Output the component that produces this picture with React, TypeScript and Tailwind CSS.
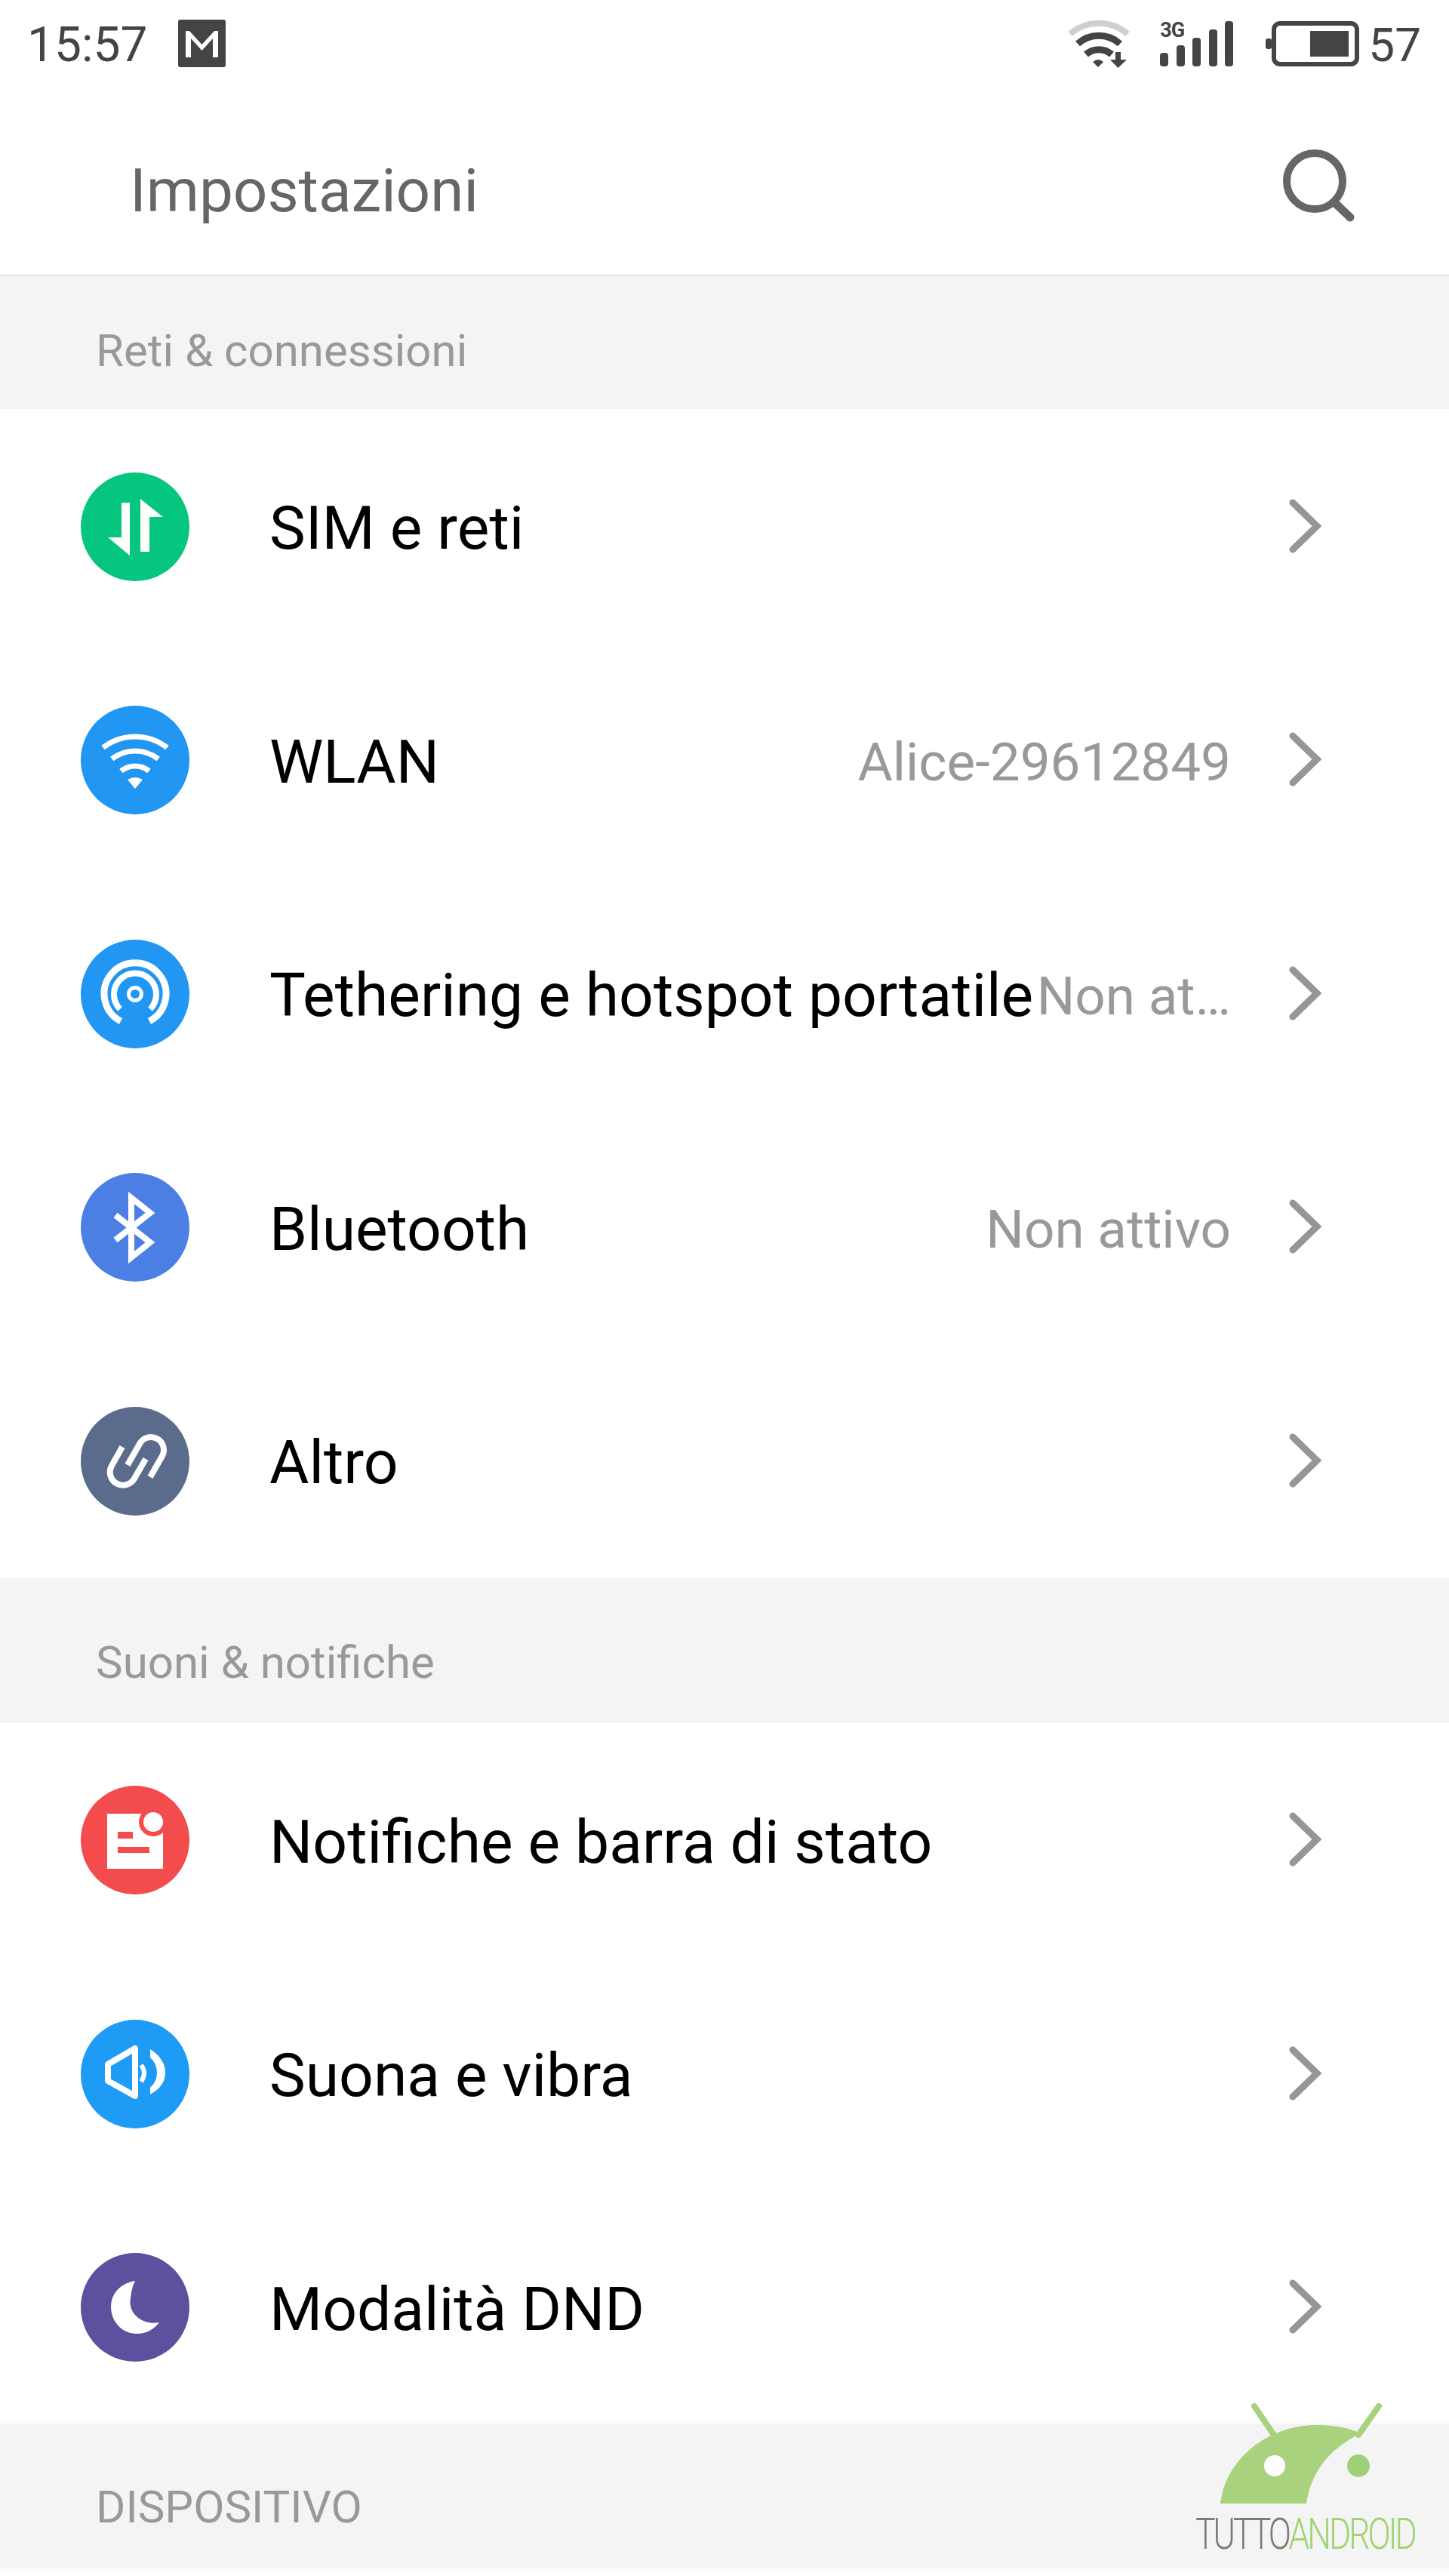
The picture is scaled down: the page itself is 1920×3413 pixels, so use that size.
const sans = "font-['Roboto','Noto_Sans',sans-serif]";

const Circle = ({ color, children }: { color: string; children: React.ReactNode }) => (
  <svg width={144} height={144} viewBox="0 0 144 144" className="mt-[2px] shrink-0">
    <circle cx={72} cy={72} r={72} fill={color} />
    {children}
  </svg>
);

const SimIcon = () => (
  <Circle color="#06c67f">
    <path d="M54 40H65V110L36 86H54Z M79 35L109 59H91V105H79Z" fill="#fff" />
  </Circle>
);

const WlanIcon = () => (
  <Circle color="#2196f3">
    <g fill="none" stroke="#fff" strokeWidth={7}>
      <path d="M29.5 55.6A69 69 0 0 1 114.5 55.6" />
      <path d="M41.2 70.6A50 50 0 0 1 102.8 70.6" />
      <path d="M53.5 86.4A30 30 0 0 1 90.5 86.4" />
    </g>
    <path d="M72 110L62 98Q72 92 82 98Z" fill="#fff" />
  </Circle>
);

const HotspotIcon = () => (
  <Circle color="#2196f3">
    <g fill="none" stroke="#fff">
      <circle cx={72} cy={72} r={8.5} strokeWidth={5} />
      <path d="M53 108A41 41 0 1 1 91 108" strokeWidth={9} />
      <path d="M52 92A28 28 0 1 1 92 92" strokeWidth={8} />
    </g>
  </Circle>
);

const BluetoothIcon = () => (
  <Circle color="#4c7fe3">
    <path d="M46 56L92 92L67 112V33L92 53L46 89" fill="none" stroke="#fff" strokeWidth={8} />
  </Circle>
);

const LinkIcon = () => (
  <Circle color="#5b6b8b">
    <g fill="none" stroke="#fff" strokeWidth={8}>
      <path d="M55 53L41 78A17 17 0 0 0 71 95L86 69" />
      <path d="M62 77L78 49A17 17 0 0 1 108 65L92 93" />
    </g>
  </Circle>
);

const NotifyIcon = () => (
  <Circle color="#f44b4d">
    <path d="M35 37H109V110H35Z" fill="#fff" />
    <circle cx={96} cy={48} r={19} fill="#f44b4d" />
    <circle cx={96} cy={48} r={13} fill="#fff" />
    <path d="M49 61H69V70H49Z M49 81H91V89H49Z" fill="#f44b4d" />
  </Circle>
);

const SoundIcon = () => (
  <Circle color="#1e9bf5">
    <path d="M36 59L72 38V101L36 81Z" fill="none" stroke="#fff" strokeWidth={8} strokeLinejoin="round" />
    <path d="M80 60Q88 70 80 82" fill="none" stroke="#fff" strokeWidth={6} />
    <path d="M92 39Q112 52 112 70Q112 88 92 99L92 90Q101 82 101 70Q101 58 92 50Z" fill="#fff" />
  </Circle>
);

const MoonIcon = () => (
  <Circle color="#5b519f">
    <path d="M72 37C52 40 40 55 40 71C40 92 56 107 74 107C87 107 97 101 104 92C84 96 62 82 66 60C67 50 69 43 72 37Z" fill="#fff" />
  </Circle>
);

const Chevron = () => (
  <svg width={44} height={72} viewBox="0 0 44 72" className="block">
    <path d="M5 5L37 36L5 67" fill="none" stroke="#969696" strokeWidth={9} strokeLinecap="round" />
  </svg>
);

const Section = ({ title, className }: { title: string; className: string }) => (
  <div className={`flex items-center bg-[#f4f4f4] pl-[127px] text-[60px] text-[#999] ${className}`}>{title}</div>
);

const Row = ({ icon, label, value }: { icon: React.ReactNode; label: string; value?: string }) => (
  <div className="flex h-[309.5px] items-center pl-[107px] pr-[168px]">
    {icon}
    <span className="ml-[106px] mt-[8px] whitespace-nowrap text-[80.4px] text-black">{label}</span>
    <span className="ml-auto mt-[8px] whitespace-nowrap text-[71px] text-[#999]">{value}</span>
    <span className="ml-[77px] shrink-0"><Chevron /></span>
  </div>
);

const StatusIcons = () => (
  <div className="flex items-start">
    <svg width={85} height={70} viewBox="0 0 85 70" className="mt-[25px]">
      <g fill="none" strokeWidth={8}>
        <path d="M3 20A58 58 0 0 1 79 20" stroke="#cfcfcf" />
        <path d="M13 33A42 42 0 0 1 69 33" stroke="#444" strokeWidth={9} />
        <path d="M24 47A26 26 0 0 1 58 47" stroke="#444" strokeWidth={9} />
      </g>
      <path d="M40 64L33 57Q40 51 47 57Z" fill="#444" />
      <path d="M63 44H70V54H78L66.5 65L56 54H63Z" fill="#444" />
    </svg>
    <div className="relative ml-[37px] mt-[28px] h-[60px] w-[97px]">
      <span className="absolute left-0 top-0 text-[27px] font-bold leading-[24px] tracking-[-1px] text-[#444]">3G</span>
      <svg width={97} height={60} viewBox="0 0 97 60">
        <g fill="#444">
          <rect x={0} y={42} width={11} height={18} rx={4} />
          <rect x={22} y={32} width={11} height={28} rx={4} />
          <rect x={43} y={22} width={11} height={38} rx={4} />
          <rect x={65} y={11} width={11} height={49} rx={4} />
          <rect x={86} y={0} width={11} height={60} rx={4} />
        </g>
      </svg>
    </div>
    <svg width={124} height={60} viewBox="0 0 124 60" className="ml-[43px] mt-[28px]">
      <rect x={11} y={3} width={110} height={54} rx={8} fill="none" stroke="#444" strokeWidth={6} />
      <rect x={0} y={23} width={8} height={14} rx={3} fill="#444" />
      <rect x={59} y={13} width={51} height={34} fill="#444" />
    </svg>
    <span className="ml-[12px] mt-[24px] text-[62px] leading-[72px] text-[#444]">57</span>
  </div>
);

const Watermark = () => (
  <div className="absolute left-[1584px] top-[3184px] w-[290px]">
    <svg width={290} height={138} viewBox="0 0 290 138" className="block">
      <path d="M78 4L104 42M243 4L216 42" stroke="#a8d27e" strokeWidth={8} strokeLinecap="round" fill="none" />
      <path d="M33 133C40 75 95 29 160 29C185 29 205 33 218 40L228 36C190 52 155 80 147 133Z" fill="#a8d27e" />
      <circle cx={105} cy={83} r={14} fill="#fdfdfd" />
      <circle cx={216} cy={83} r={15} fill="#a0cf79" />
    </svg>
    <div className="mt-[10px] origin-left scale-x-[0.77] whitespace-nowrap text-[58px] font-light leading-[50px] tracking-[-4px]">
      <span className="text-[#7c7c7c]">TUTTO</span>
      <span className="text-[#9fd474]">ANDROID</span>
    </div>
  </div>
);

export default function App() {
  return (
    <div className={`relative h-[3413px] w-[1920px] overflow-hidden bg-white ${sans}`}>
      <div className="flex h-[120px] items-start justify-between pl-[36px] pr-[37px]">
        <div className="flex items-start">
          <span className="mt-[24px] text-[64px] leading-[72px] text-[#444]">15:57</span>
          <svg width={63} height={63} viewBox="0 0 63 63" className="ml-[41px] mt-[26px]">
            <rect width={63} height={63} rx={3} fill="#444" />
            <path d="M10 50V15H15L31.5 33L48 15H53V50H46V25L31.5 41L17 25V50Z" fill="#fff" />
          </svg>
        </div>
        <StatusIcons />
      </div>
      <div className="flex h-[246px] items-start justify-between border-b-2 border-[#e2e2e2] pl-[172px] pr-[124px]">
        <span className="mt-[86px] text-[80px] leading-[94px] text-[#666]">Impostazioni</span>
        <svg width={98} height={98} viewBox="0 0 98 98" className="mt-[77px]">
          <circle cx={44} cy={43} r={37} fill="none" stroke="#666" strokeWidth={10} />
          <path d="M70 71L91 91" stroke="#666" strokeWidth={11} strokeLinecap="round" />
        </svg>
      </div>
      <Section title="Reti & connessioni" className="h-[176px] pt-[22px]" />
      <Row icon={<SimIcon />} label="SIM e reti" />
      <Row icon={<WlanIcon />} label="WLAN" value="Alice-29612849" />
      <Row icon={<HotspotIcon />} label="Tethering e hotspot portatile" value="Non at…" />
      <Row icon={<BluetoothIcon />} label="Bluetooth" value="Non attivo" />
      <Row icon={<LinkIcon />} label="Altro" />
      <Section title="Suoni & notifiche" className="h-[193px] pt-[34px]" />
      <Row icon={<NotifyIcon />} label="Notifiche e barra di stato" />
      <Row icon={<SoundIcon />} label="Suona e vibra" />
      <Row icon={<MoonIcon />} label="Modalità DND" />
      <Section title="DISPOSITIVO" className="h-[192px] pt-[30px]" />
      <Watermark />
    </div>
  );
}
